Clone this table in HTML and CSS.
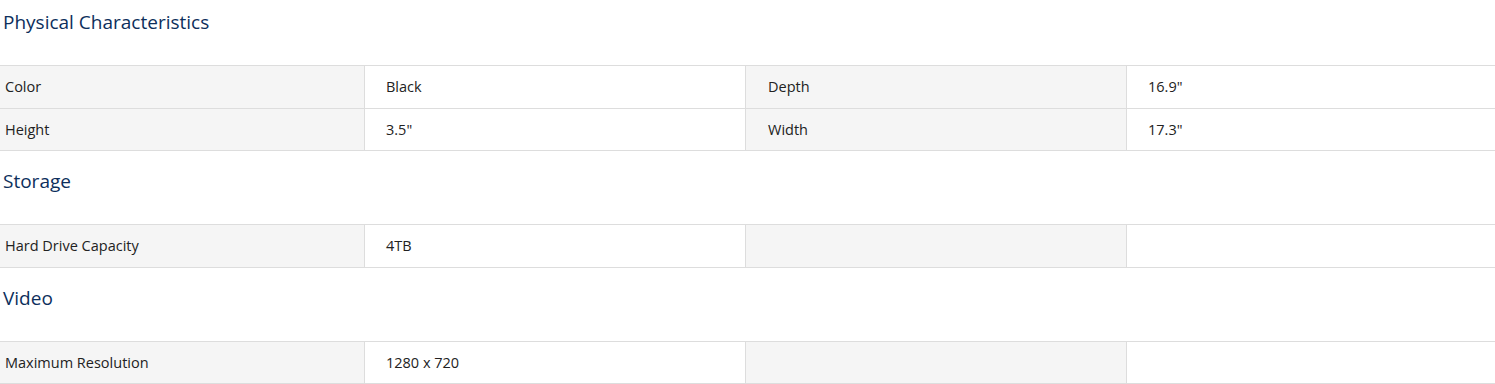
FILE: index.html
```html
<!DOCTYPE html>
<html lang="en">
<head>
<meta charset="utf-8">
<title>Specifications</title>
<link rel="stylesheet" href="styles.css">
</head>
<body>
<div class="specs">
  <section class="spec-group">
    <h2 class="spec-title">Physical Characteristics</h2>
    <div class="spec-table">
      <div class="row">
        <div class="cell label first">Color</div>
        <div class="cell value">Black</div>
        <div class="cell label">Depth</div>
        <div class="cell value">16.9"</div>
      </div>
      <div class="row">
        <div class="cell label first">Height</div>
        <div class="cell value">3.5"</div>
        <div class="cell label">Width</div>
        <div class="cell value">17.3"</div>
      </div>
    </div>
  </section>
  <section class="spec-group">
    <h2 class="spec-title">Storage</h2>
    <div class="spec-table">
      <div class="row">
        <div class="cell label first">Hard Drive Capacity</div>
        <div class="cell value">4TB</div>
        <div class="cell label"></div>
        <div class="cell value"></div>
      </div>
    </div>
  </section>
  <section class="spec-group">
    <h2 class="spec-title">Video</h2>
    <div class="spec-table">
      <div class="row">
        <div class="cell label first">Maximum Resolution</div>
        <div class="cell value">1280 x 720</div>
        <div class="cell label"></div>
        <div class="cell value"></div>
      </div>
    </div>
  </section>
</div>
</body>
</html>
```

FILE: styles.css
```css
html, body {
  margin: 0;
  padding: 0;
  background: #ffffff;
}

body {
  font-family: "Open Sans", "Noto Sans", "Liberation Sans", sans-serif;
  color: #222222;
}

.specs {
  display: flex;
  flex-direction: column;
  gap: 8px;
}

.spec-title {
  margin: 0;
  padding: 10px 0 31px 3px;
  font-size: 19px;
  line-height: 24px;
  font-weight: 500;
  color: #0d2f5c;
}

.spec-table {
  border-top: 1px solid #dddddd;
}

.row {
  display: grid;
  grid-template-columns: 364px 381px 381px 1fr;
  box-sizing: border-box;
  height: 42.5px;
  border-bottom: 1px solid #dddddd;
}

.cell {
  display: flex;
  align-items: center;
  padding-left: 22px;
  font-size: 14.5px;
  border-left: 1px solid #dddddd;
}

.cell.first {
  padding-left: 5px;
  border-left: none;
}

.label {
  background: #f5f5f5;
}

.value {
  background: #ffffff;
  padding-left: 21px;
}
```
